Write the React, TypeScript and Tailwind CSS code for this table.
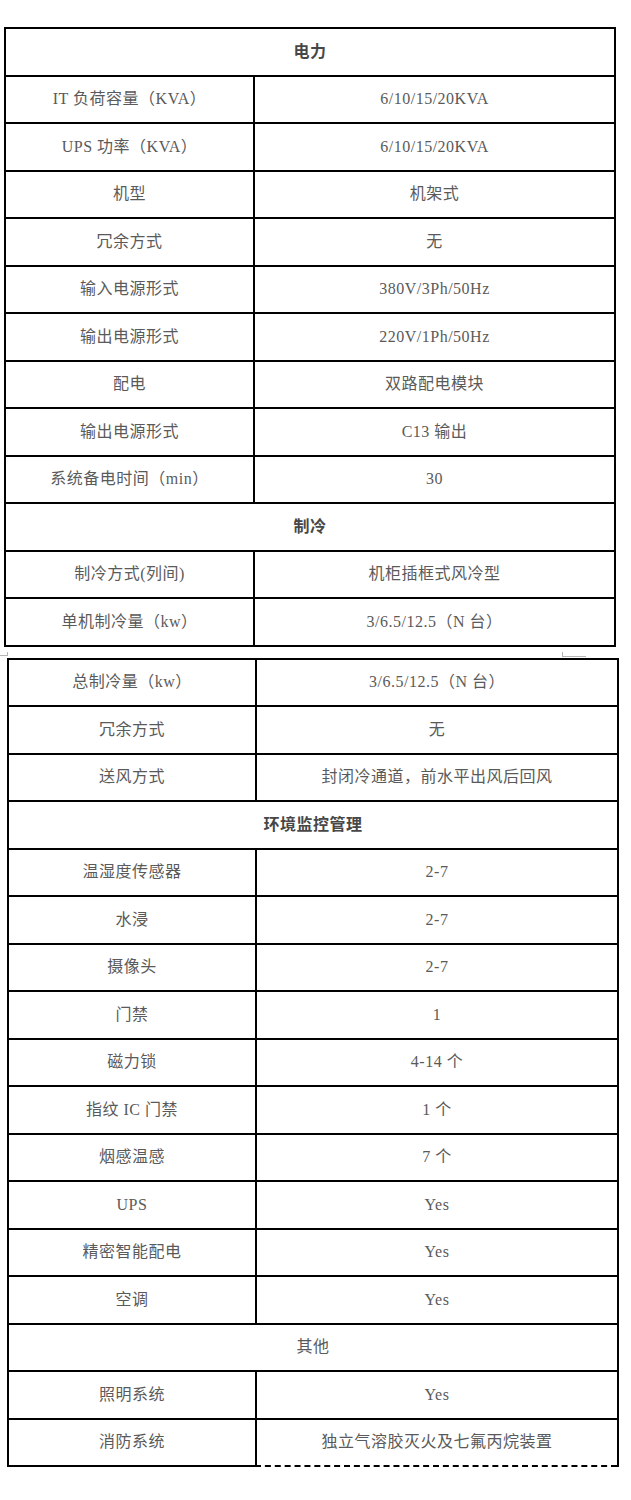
import React from "react";

type Row =
  | { kind: "head"; text: string; bold?: boolean }
  | { kind: "pair"; label: string; value: string };

const powerAndCooling: Row[] = [
  { kind: "head", text: "电力", bold: true },
  { kind: "pair", label: "IT 负荷容量（KVA）", value: "6/10/15/20KVA" },
  { kind: "pair", label: "UPS 功率（KVA）", value: "6/10/15/20KVA" },
  { kind: "pair", label: "机型", value: "机架式" },
  { kind: "pair", label: "冗余方式", value: "无" },
  { kind: "pair", label: "输入电源形式", value: "380V/3Ph/50Hz" },
  { kind: "pair", label: "输出电源形式", value: "220V/1Ph/50Hz" },
  { kind: "pair", label: "配电", value: "双路配电模块" },
  { kind: "pair", label: "输出电源形式", value: "C13 输出" },
  { kind: "pair", label: "系统备电时间（min）", value: "30" },
  { kind: "head", text: "制冷", bold: true },
  { kind: "pair", label: "制冷方式(列间)", value: "机柜插框式风冷型" },
  { kind: "pair", label: "单机制冷量（kw）", value: "3/6.5/12.5（N 台）" },
];

const monitoringAndOther: Row[] = [
  { kind: "pair", label: "总制冷量（kw）", value: "3/6.5/12.5（N 台）" },
  { kind: "pair", label: "冗余方式", value: "无" },
  { kind: "pair", label: "送风方式", value: "封闭冷通道，前水平出风后回风" },
  { kind: "head", text: "环境监控管理", bold: true },
  { kind: "pair", label: "温湿度传感器", value: "2-7" },
  { kind: "pair", label: "水浸", value: "2-7" },
  { kind: "pair", label: "摄像头", value: "2-7" },
  { kind: "pair", label: "门禁", value: "1" },
  { kind: "pair", label: "磁力锁", value: "4-14 个" },
  { kind: "pair", label: "指纹 IC 门禁", value: "1 个" },
  { kind: "pair", label: "烟感温感", value: "7 个" },
  { kind: "pair", label: "UPS", value: "Yes" },
  { kind: "pair", label: "精密智能配电", value: "Yes" },
  { kind: "pair", label: "空调", value: "Yes" },
  { kind: "head", text: "其他" },
  { kind: "pair", label: "照明系统", value: "Yes" },
  { kind: "pair", label: "消防系统", value: "独立气溶胶灭火及七氟丙烷装置" },
];

function SpecTable({
  rows,
  leftWidth,
  dashedEnd,
}: {
  rows: Row[];
  leftWidth: string;
  dashedEnd?: boolean;
}) {
  return (
    <div
      className={
        dashedEnd
          ? "w-[612px] border-x-2 border-t-2 border-black"
          : "w-[612px] border-2 border-black"
      }
    >
      {rows.map((row, i) => {
        const last = i === rows.length - 1;
        const top = i === 0 ? "" : "border-t-2 border-black";
        if (row.kind === "head") {
          return (
            <div key={i} className={top}>
              <div
                className={`flex h-[45.5px] items-center justify-center ${
                  row.bold ? "font-bold text-[#474747]" : "text-[#5a5a5a]"
                }`}
              >
                {row.text}
              </div>
            </div>
          );
        }
        return (
          <div key={i} className={`flex ${top}`}>
            <div
              className={`flex h-[45.5px] shrink-0 items-center justify-center ${leftWidth} ${
                last && dashedEnd ? "box-content border-b-2 border-black" : ""
              }`}
            >
              {row.label}
            </div>
            <div
              className={`flex h-[45.5px] flex-1 items-center justify-center border-l-2 border-black ${
                last && dashedEnd ? "box-content border-b-2 [border-bottom-style:dashed]" : ""
              }`}
            >
              {row.value}
            </div>
          </div>
        );
      })}
    </div>
  );
}

export default function App() {
  return (
    <div
      className="min-h-[1500px] bg-white pt-[27px] text-[16px] tracking-[0.5px] text-[#5a5a5a]"
      style={{ fontFamily: '"Liberation Serif", "Noto Sans CJK SC", serif' }}
    >
      <div className="ml-[4px]">
        <SpecTable rows={powerAndCooling} leftWidth="w-[247px]" />
      </div>

      {/* page-break crop marks between the two table halves */}
      <div className="flex h-[11px] items-start pt-[5px]">
        <div className="h-[4px] w-[8px] border-b border-r border-[#b5b5b5]" />
        <div className="ml-[554px] h-[5px] w-[24px] border-b border-l border-[#b5b5b5]" />
      </div>

      <div className="ml-[7px]">
        <SpecTable rows={monitoringAndOther} leftWidth="w-[246px]" dashedEnd />
      </div>
    </div>
  );
}
